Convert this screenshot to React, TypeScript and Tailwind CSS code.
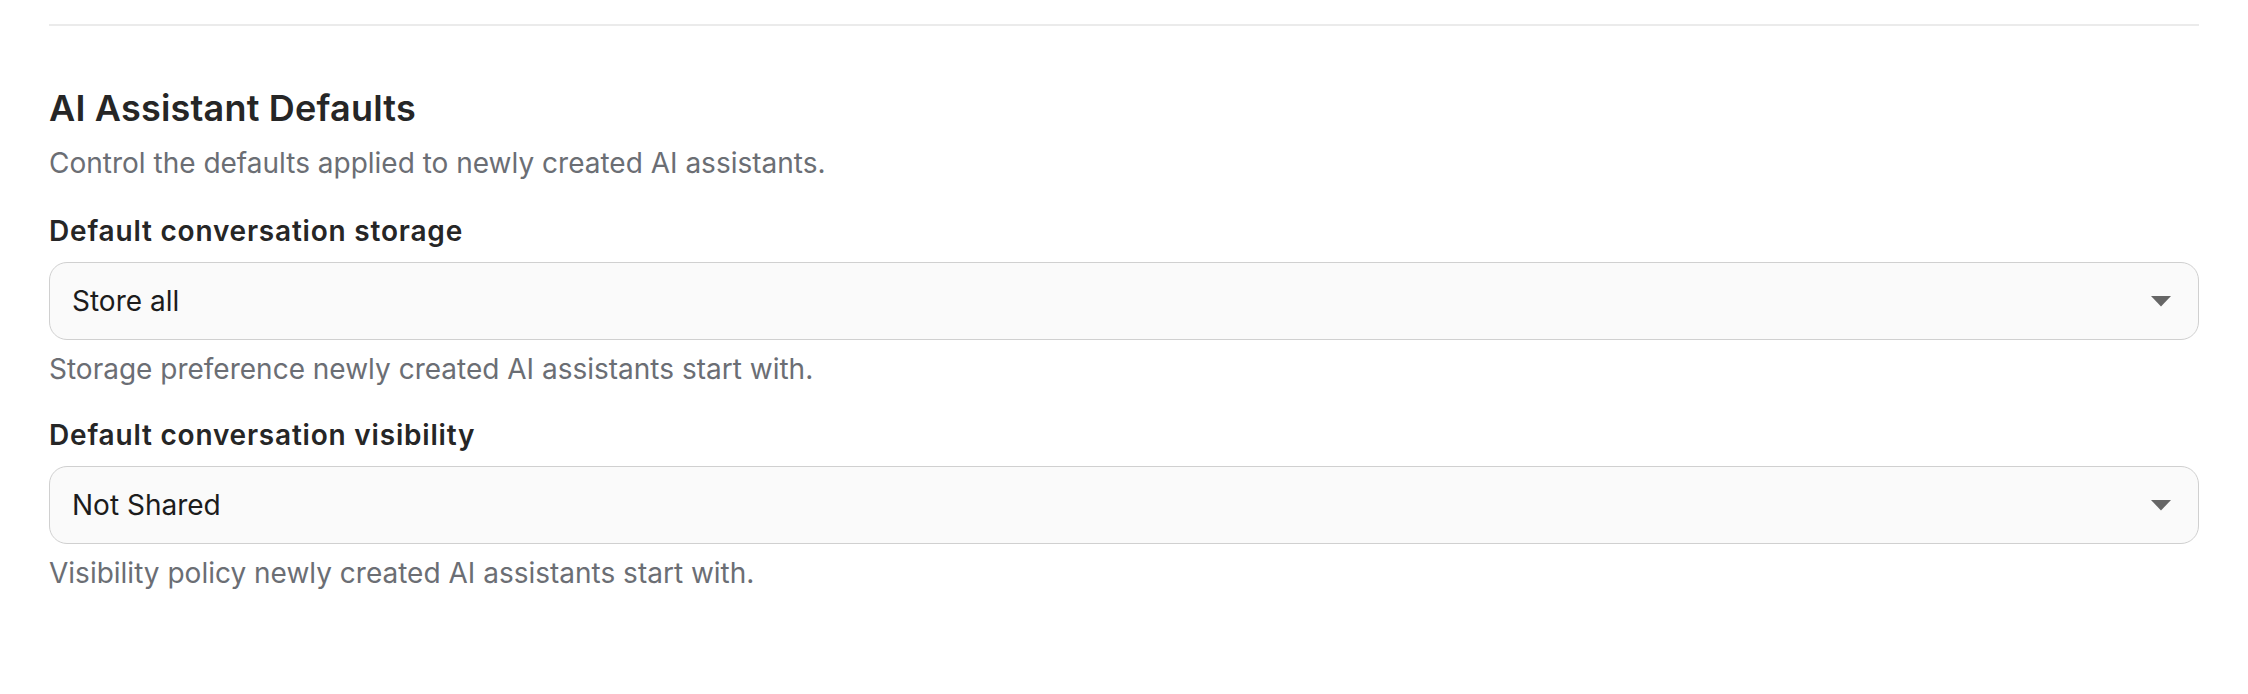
import React from "react";

function Caret() {
  return (
    <svg width="20" height="11" viewBox="0 0 20 11" className="shrink-0">
      <path d="M0 0 H20 L10 10.5 Z" fill="#666666" />
    </svg>
  );
}

function SelectBox({ value }: { value: string }) {
  return (
    <div className="mt-[13px] flex h-[78px] items-center justify-between rounded-[18px] border-[1.5px] border-[#d0d0d0] bg-[#fafafa] pl-[22px] pr-[27px]">
      <span className="text-[28px] leading-[36px] text-[#1c1c1c]">{value}</span>
      <Caret />
    </div>
  );
}

export default function App() {
  return (
    <div
      className="min-h-[694px] w-full bg-white px-[49px] pt-[24px]"
      style={{ fontFamily: "Inter, 'Noto Sans', sans-serif" }}
    >
      <div className="h-[2px] w-full bg-[#ebebeb]" />
      <h2 className="mt-[60px] text-[36px] font-semibold leading-[44px] tracking-[0.2px] text-[#262626]">
        AI Assistant Defaults
      </h2>
      <p className="mt-[17px] text-[28px] leading-[32px] text-[#6b6e74]">
        Control the defaults applied to newly created AI assistants.
      </p>

      <div className="mt-[34px] text-[28px] font-semibold leading-[36px] tracking-[0.8px] text-[#262626]">
        Default conversation storage
      </div>
      <SelectBox value="Store all" />
      <p className="mt-[13px] text-[28px] leading-[32px] text-[#6b6e74]">
        Storage preference newly created AI assistants start with.
      </p>

      <div className="mt-[32px] text-[28px] font-semibold leading-[36px] tracking-[0.8px] text-[#262626]">
        Default conversation visibility
      </div>
      <SelectBox value="Not Shared" />
      <p className="mt-[13px] text-[28px] leading-[32px] text-[#6b6e74]">
        Visibility policy newly created AI assistants start with.
      </p>
    </div>
  );
}
